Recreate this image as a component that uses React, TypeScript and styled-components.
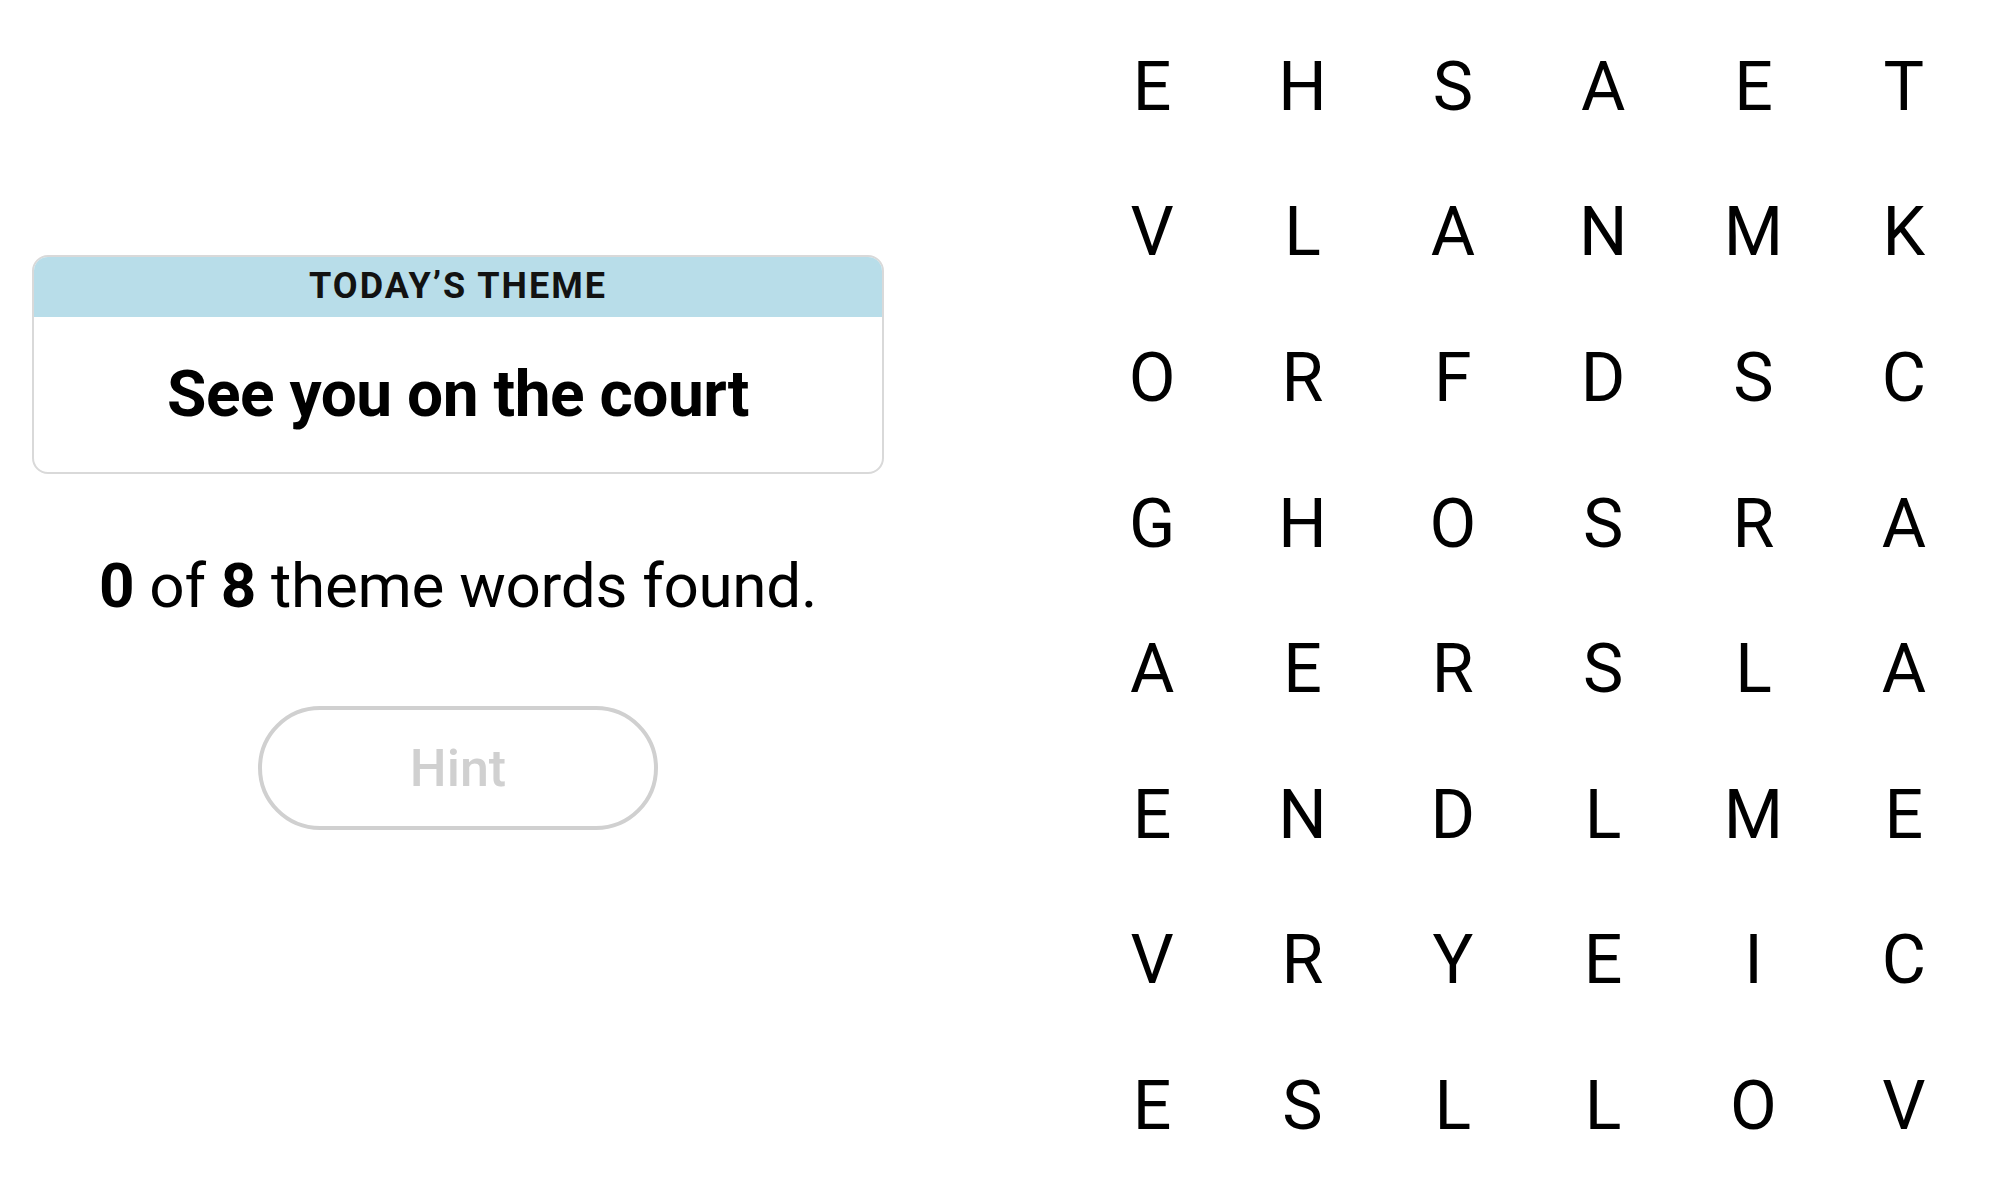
import React from 'react';
import styled, { createGlobalStyle } from 'styled-components';

const GlobalStyle = createGlobalStyle`
  html, body {
    margin: 0;
    padding: 0;
    background: #ffffff;
  }
  body {
    font-family: Roboto, 'Liberation Sans', Arial, sans-serif;
    color: #000;
  }
`;

const letters = [
  'EHSAET',
  'VLANMK',
  'ORFDSC',
  'GHOSRA',
  'AERSLA',
  'ENDLME',
  'VRYEIC',
  'ESLLOV',
];

const App = () => {
  return (
    <Page>
      <GlobalStyle />
      <Side>
        <ThemeCard>
          <ThemeHeader>TODAY’S THEME</ThemeHeader>
          <ThemeBody>See you on the court</ThemeBody>
        </ThemeCard>
        <Counter>
          <b>0</b> of <b>8</b> theme words found.
        </Counter>
        <HintButton disabled>Hint</HintButton>
      </Side>
      <Board>
        {letters.map((row, r) =>
          row.split('').map((ch, c) => <Cell key={`${r}-${c}`}>{ch}</Cell>)
        )}
      </Board>
    </Page>
  );
};

export default App;

const Page = styled.div`
  width: 2000px;
  height: 1202px;
  box-sizing: border-box;
  display: flex;
  flex-direction: row;
  padding: 14px 21px 0 32px;
`;
const Side = styled.div`
  width: 852px;
  display: flex;
  flex-direction: column;
  align-items: center;
  padding-top: 241px;
`;
const ThemeCard = styled.div`
  width: 100%;
  box-sizing: border-box;
  border: 2px solid #d9d9d9;
  border-radius: 16px;
  overflow: hidden;
`;
const ThemeHeader = styled.div`
  height: 62px;
  margin: -2px -2px 0;
  background: #b8dde9;
  display: flex;
  align-items: center;
  justify-content: center;
  font-size: 36px;
  font-weight: 700;
  letter-spacing: 2px;
  color: #121212;
`;
const ThemeBody = styled.div`
  height: 155px;
  display: flex;
  align-items: center;
  justify-content: center;
  font-size: 64px;
  font-weight: 700;
  letter-spacing: -0.5px;
`;
const Counter = styled.div`
  margin-top: 72px;
  font-size: 62px;
  line-height: 80px;
  font-weight: 400;
  letter-spacing: -0.3px;
  b {
    font-weight: 700;
  }
`;
const HintButton = styled.button`
  margin-top: 80px;
  width: 400px;
  height: 124px;
  box-sizing: border-box;
  border: 4px solid #d0d0d0;
  border-radius: 62px;
  background: #fff;
  color: #d0d0d0;
  font-family: Roboto, 'Liberation Sans', Arial, sans-serif;
  font-size: 52px;
  font-weight: 500;
  padding: 0;
`;
const Board = styled.div`
  margin-left: auto;
  width: 902px;
  display: grid;
  grid-template-columns: repeat(6, 1fr);
  grid-auto-rows: 145.6px;
`;
const Cell = styled.div`
  display: flex;
  align-items: center;
  justify-content: center;
  font-size: 68px;
  font-weight: 400;
  color: #000;
`;
